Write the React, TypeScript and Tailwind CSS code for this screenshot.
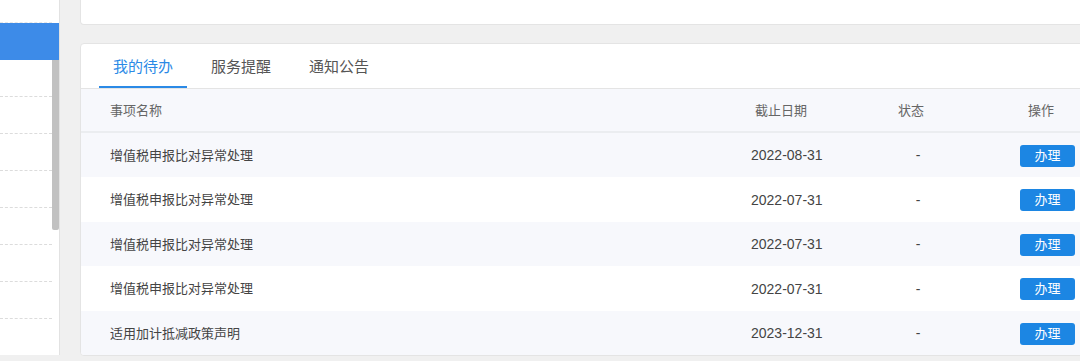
import React from "react";

type Todo = {
  name: string;
  date: string;
  status: string;
};

const todos: Todo[] = [
  { name: "增值税申报比对异常处理", date: "2022-08-31", status: "-" },
  { name: "增值税申报比对异常处理", date: "2022-07-31", status: "-" },
  { name: "增值税申报比对异常处理", date: "2022-07-31", status: "-" },
  { name: "增值税申报比对异常处理", date: "2022-07-31", status: "-" },
  { name: "适用加计抵减政策声明", date: "2023-12-31", status: "-" },
];

const tabs = ["我的待办", "服务提醒", "通知公告"];

const font = {
  fontFamily: '"Liberation Sans", "Noto Sans CJK SC", sans-serif',
};

function Sidebar() {
  return (
    <div className="flex h-[355px] w-[60px] shrink-0 border-r border-[#e2e2e2] bg-white">
      <div className="flex w-[52px] flex-col">
        <div className="h-[23px] border-b border-dashed border-[#e6e6e6]" />
        <div className="h-[37px] bg-[#3d8be8]" />
        {[0, 1, 2, 3, 4, 5, 6].map((i) => (
          <div key={i} className="h-[37px] border-b border-dashed border-[#dcdcdc]" />
        ))}
      </div>
      <div className="flex w-[7px] flex-col">
        <div className="h-[23px]" />
        <div className="h-[37px] bg-[#3d8be8]" />
        <div className="h-[170px] rounded-b-[2px] bg-[#c1c1c1]" />
      </div>
    </div>
  );
}

function TodoCard() {
  return (
    <div className="w-[1036px] overflow-hidden rounded-[4px] border border-[#e4e4e4] bg-white">
      <div className="flex h-[45px] gap-[10px] border-b border-[#e4e4e4] pl-[18px]">
        {tabs.map((tab, i) => (
          <div
            key={tab}
            className={
              i === 0
                ? "flex items-center border-b-2 border-[#2b8ae6] px-[14px] pt-[4px] text-[15px] text-[#2b8ae6]"
                : "flex items-center border-b-2 border-transparent px-[14px] pt-[4px] text-[15px] text-[#555]"
            }
          >
            {tab}
          </div>
        ))}
      </div>

      <div className="grid h-[44px] grid-cols-[636px_140px_108px_152px] items-center border-b-2 border-[#ebedf0] bg-[#f7f8fc] pt-[1px] text-[13px] text-[#666]">
        <div className="pl-[29px]">事项名称</div>
        <div className="pl-[38px]">截止日期</div>
        <div className="text-center">状态</div>
        <div className="pl-[63px]">操作</div>
      </div>

      {todos.map((todo, i) => (
        <div
          key={i}
          className={
            i % 2 === 0
              ? "grid h-[44px] grid-cols-[636px_140px_108px_152px] items-center bg-[#f7f8fc] pt-[1px] text-[#444]"
              : "grid h-[45px] grid-cols-[636px_140px_108px_152px] items-center bg-white pt-[1px] text-[#444]"
          }
        >
          <div className="pl-[29px] text-[13px]">{todo.name}</div>
          <div className="pl-[34px] text-[14px]">{todo.date}</div>
          <div className="pl-[14px] text-center text-[14px]">{todo.status}</div>
          <div className="pl-[55px]">
            <button className="flex h-[22px] w-[55px] items-center justify-center rounded-[3px] bg-[#1c86e3] text-[13px] text-white">
              办理
            </button>
          </div>
        </div>
      ))}
    </div>
  );
}

export default function App() {
  return (
    <div className="flex h-[361px] w-[1080px] overflow-hidden bg-[#f0f0f0]" style={font}>
      <Sidebar />
      <div className="ml-[20px] flex flex-col">
        <div className="h-[25px] w-[1036px] rounded-b-[4px] border border-t-0 border-[#e4e4e4] bg-white" />
        <div className="h-[18px]" />
        <TodoCard />
      </div>
    </div>
  );
}
